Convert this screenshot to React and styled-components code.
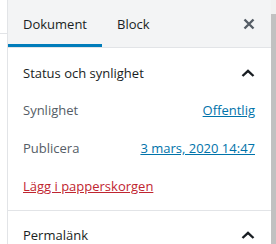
import React from 'react';
import styled, { createGlobalStyle } from 'styled-components';

const GlobalStyle = createGlobalStyle`
  html, body {
    margin: 0;
    padding: 0;
    background: #fff;
    overflow: hidden;
  }
  body {
    font-family: "Open Sans", "Noto Sans", sans-serif;
    font-size: 13px;
    color: #191e23;
  }
`;

const Screen = styled.div`
  display: flex;
  width: 276px;
  height: 244px;
  overflow: hidden;
`;

const Gutter = styled.div`
  width: 7px;
  flex-shrink: 0;
  height: 33px;
  border-bottom: 1px solid #e2e4e7;
`;

const Sidebar = styled.aside`
  flex: 1;
  border-left: 1px solid #e2e4e7;
  display: flex;
  flex-direction: column;
  min-height: 0;

  & > * {
    flex-shrink: 0;
  }
`;

const Scrollbar = styled.div`
  width: 5px;
  flex-shrink: 0;
  background: #f1f1f1;
  display: flex;
  flex-direction: column;
  padding-top: 14px;

  &::after {
    content: "";
    flex: 1;
    background: #c1c1c1;
  }
`;

const Header = styled.div`
  display: flex;
  align-items: stretch;
  height: 47px;
  background: #f3f4f5;
  border-bottom: 1px solid #e2e4e7;
`;

const Tab = styled.button`
  all: unset;
  display: flex;
  align-items: center;
  padding: 0 15px;
  font: inherit;
  color: #191e23;
  box-shadow: ${(p) => (p.$active ? 'inset 0 -3px 0 #007cba' : 'none')};
  cursor: pointer;
`;

const Close = styled.button`
  all: unset;
  margin-left: auto;
  width: 44px;
  display: flex;
  align-items: center;
  justify-content: center;
  cursor: pointer;
`;

const Panel = styled.section`
  border-bottom: 1px solid #e2e4e7;
`;

const PanelTitle = styled.div`
  display: flex;
  align-items: center;
  justify-content: space-between;
  height: ${(p) => p.$height}px;
  padding: 0 16px 0 15px;
  color: #191e23;
`;

const PanelBody = styled.div`
  display: flex;
  flex-direction: column;
  gap: 18px;
  padding: 2px 16px 14px 15px;
`;

const Row = styled.div`
  display: flex;
  justify-content: space-between;
  align-items: center;
  line-height: 20px;
`;

const Label = styled.span`
  color: #555d66;
`;

const Link = styled.a`
  color: ${(p) => (p.$danger ? '#bf2530' : '#0073aa')};
  text-decoration: underline;
  cursor: pointer;
`;

const Chevron = () => (
  <svg width="14" height="8" viewBox="0 0 14 8">
    <path d="M1.5 7L7 1.8L12.5 7" fill="none" stroke="#191e23" strokeWidth="2.4" />
  </svg>
);

const CloseIcon = () => (
  <svg width="12" height="12" viewBox="0 0 12 12">
    <path d="M1.5 1.5L10.5 10.5M10.5 1.5L1.5 10.5" stroke="#555d66" strokeWidth="2.4" />
  </svg>
);

export default function App() {
  return (
    <>
      <GlobalStyle />
      <Screen>
        <Gutter />
        <Sidebar>
          <Header>
            <Tab $active>Dokument</Tab>
            <Tab>Block</Tab>
            <Close aria-label="Stäng">
              <CloseIcon />
            </Close>
          </Header>
          <Panel>
            <PanelTitle $height={50}>
              Status och synlighet
              <Chevron />
            </PanelTitle>
            <PanelBody>
              <Row>
                <Label>Synlighet</Label>
                <Link>Offentlig</Link>
              </Row>
              <Row>
                <Label>Publicera</Label>
                <Link>3 mars, 2020 14:47</Link>
              </Row>
              <Row>
                <Link $danger>Lägg i papperskorgen</Link>
              </Row>
            </PanelBody>
          </Panel>
          <Panel>
            <PanelTitle $height={47}>
              Permalänk
              <Chevron />
            </PanelTitle>
          </Panel>
        </Sidebar>
        <Scrollbar />
      </Screen>
    </>
  );
}
